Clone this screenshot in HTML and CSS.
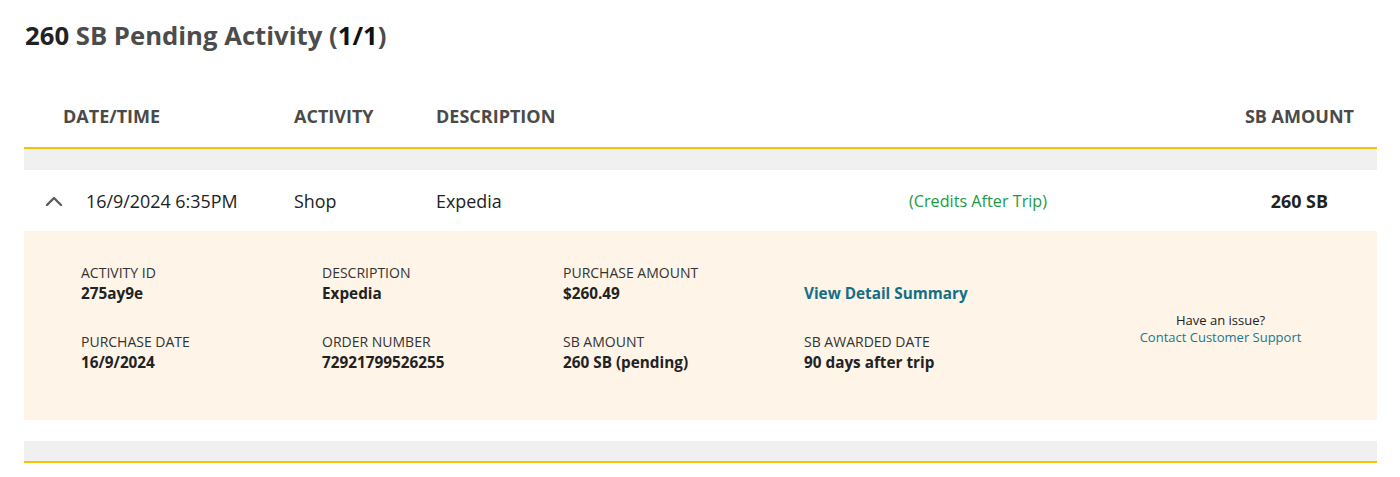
FILE: index.html
```html
<!DOCTYPE html>
<html lang="en">
<head>
<meta charset="utf-8">
<title>Pending Activity</title>
<link rel="stylesheet" href="styles.css">
</head>
<body>
<div class="page">
  <h1 class="title"><span class="dark">260</span> SB Pending Activity (<span class="darker">1/1</span>)</h1>

  <div class="table">
    <div class="thead">
      <div class="th c-date">DATE/TIME</div>
      <div class="th c-act">ACTIVITY</div>
      <div class="th c-desc">DESCRIPTION</div>
      <div class="th c-amt">SB AMOUNT</div>
    </div>
    <div class="band"></div>

    <div class="row">
      <div class="chev">
        <svg width="18" height="10" viewBox="0 0 18 10"><path d="M2 9 L9 2 L16 9" fill="none" stroke="#5a5a5a" stroke-width="2.3" stroke-linecap="round" stroke-linejoin="round"/></svg>
      </div>
      <div class="cell">16/9/2024 6:35PM</div>
      <div class="cell">Shop</div>
      <div class="cell">Expedia</div>
      <div class="cell green">(Credits After Trip)</div>
      <div class="cell amt">260 SB</div>
    </div>

    <div class="detail">
      <div class="grid">
        <div class="f"><div class="lbl">ACTIVITY ID</div><div class="val">275ay9e</div></div>
        <div class="f"><div class="lbl">DESCRIPTION</div><div class="val">Expedia</div></div>
        <div class="f"><div class="lbl">PURCHASE AMOUNT</div><div class="val">$260.49</div></div>
        <div class="f"><div class="lbl">&nbsp;</div><a class="link" href="#">View Detail Summary</a></div>
        <div class="f"><div class="lbl">PURCHASE DATE</div><div class="val">16/9/2024</div></div>
        <div class="f"><div class="lbl">ORDER NUMBER</div><div class="val">72921799526255</div></div>
        <div class="f"><div class="lbl">SB AMOUNT</div><div class="val">260 SB (pending)</div></div>
        <div class="f"><div class="lbl">SB AWARDED DATE</div><div class="val">90 days after trip</div></div>
      </div>
      <div class="support">
        <div class="q">Have an issue?</div>
        <a class="contact" href="#">Contact Customer Support</a>
      </div>
    </div>

    <div class="spacer"></div>
    <div class="band bottom"></div>
  </div>
</div>
</body>
</html>
```

FILE: styles.css
```css
* { box-sizing: border-box; }
html, body { margin: 0; padding: 0; background: #fff; }
body {
  font-family: "Open Sans", "Noto Sans", "Liberation Sans", sans-serif;
  color: #222;
}
.page { padding: 0 23px 0 24px; }

.title {
  margin: 0;
  padding: 18px 0 0 1px;
  height: 76px;
  font-size: 25.7px;
  font-weight: 700;
  line-height: 36px;
  color: #4c4c4c;
}
.title .dark { color: #222; }
.title .darker { color: #111; }

.thead {
  display: grid;
  grid-template-columns: 231px 142px 1fr auto;
  align-items: center;
  height: 73px;
  padding: 9px 23px 0 39px;
  border-bottom: 2px solid #f7c300;
}
.th {
  font-size: 18px;
  font-weight: 700;
  color: #4a4a4a;
  line-height: 24px;
}
.band { height: 21px; background: #f0f0f0; }
.band.bottom { height: 22px; border-bottom: 2px solid #f7c300; }

.row {
  display: grid;
  grid-template-columns: 62px 208px 142px 473px 1fr auto;
  align-items: center;
  height: 61px;
  padding: 0 49px 0 0;
}
.chev { display: flex; justify-content: flex-end; padding-right: 23px; padding-top: 1px; }
.chev svg { display: block; }
.cell { font-size: 17.9px; line-height: 24px; color: #222; }
.cell.green { color: #1e9a45; font-size: 16.2px; }
.cell.amt { font-weight: 700; }

.detail {
  display: grid;
  grid-template-columns: 983px 1fr;
  height: 189px;
  background: #fef4e8;
  padding: 31px 0 0 57px;
  align-content: start;
  align-items: start;
}
.grid {
  display: grid;
  grid-template-columns: repeat(4, 241px);
  row-gap: 27px;
}
.lbl { font-size: 14px; line-height: 21px; color: #333; }
.val { font-size: 15.3px; line-height: 21px; font-weight: 700; color: #222; }
.link {
  display: block;
  font-size: 15.3px;
  line-height: 21px;
  font-weight: 700;
  color: #136f85;
  text-decoration: none;
}
.support { text-align: center; padding-top: 50px; }
.q { font-size: 13px; line-height: 17px; color: #222; }
.contact { display: block; font-size: 13px; line-height: 17px; color: #157a90; text-decoration: none; }

.spacer { height: 21px; }
```
